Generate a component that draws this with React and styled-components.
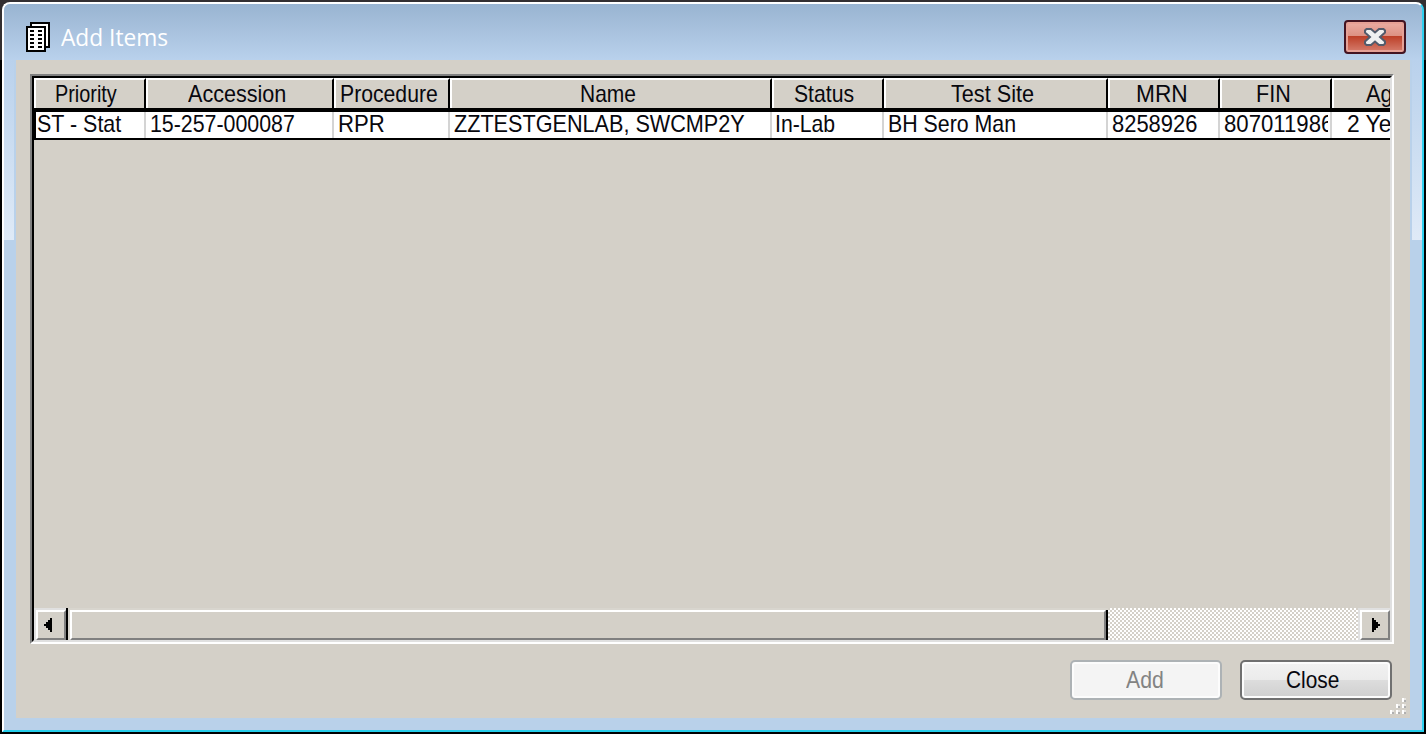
import React, { useLayoutEffect, useRef, useState } from 'react';
import styled, { createGlobalStyle } from 'styled-components';

const Global = createGlobalStyle`
  * { box-sizing: border-box; }
  body { margin: 0; background: #000; overflow: hidden; }
`;

const face = '#d4d0c8';

const Desktop = styled.div`
  width: 1426px;
  height: 734px;
  padding: 2px;
  background: linear-gradient(#332f31 0 60px, #000 60px);
`;

const Window = styled.div`
  width: 1422px;
  height: 730px;
  display: flex;
  flex-direction: column;
  border: 2px solid;
  border-color: #fff #2fd0f0 #25cdea #fff;
  border-radius: 8px 8px 0 0;
  overflow: hidden;
  background: #b9d1ea;
`;

const TitleBar = styled.div`
  flex: none;
  height: 56px;
  display: flex;
  align-items: flex-start;
  padding: 16px 16px 0 22px;
  background: linear-gradient(#99b4d1, #b9d1ec);
`;

const DocIcon = styled.svg`
  flex: none;
  width: 24px;
  height: 30px;
  margin-top: 2px;
`;

const Title = styled.div`
  flex: 1;
  padding-left: 11px;
  font: 24px/34px "Open Sans", "Noto Sans", sans-serif;
  color: #fff;
`;

const CloseBox = styled.button`
  flex: none;
  width: 62px;
  height: 34px;
  padding: 0;
  border: 2px solid #431422;
  border-radius: 4px;
  box-shadow: inset 0 0 0 2px #e6a196;
  background: linear-gradient(#ebaea4 0, #dc9082 14px, #bc3e26 14px, #d67e6e 30px);
  display: flex;
  align-items: center;
  justify-content: center;
`;

const Frame = styled.div`
  flex: 1;
  display: flex;
  min-height: 0;
  padding: 0 12px 12px;
  background:
    linear-gradient(#b9d1ec, #dfeaf7) 0 0 / 10px 180px no-repeat,
    linear-gradient(#b9d1ec, #dfeaf7) 100% 0 / 10px 180px no-repeat,
    #b9d1ea;
`;

const Client = styled.div`
  position: relative;
  flex: 1;
  display: flex;
  flex-direction: column;
  padding: 14px 16px 0 14px;
  background: ${face};
`;

const Grid = styled.div`
  flex: none;
  width: 1364px;
  height: 570px;
  border: 2px solid;
  border-color: #808080 #fff #fff #808080;
`;

const GridInner = styled.div`
  width: 1360px;
  height: 566px;
  display: flex;
  flex-direction: column;
  border: 2px solid;
  border-color: #000 #e0e0e0 #e0e0e0 #000;
  overflow: hidden;
`;

const HeaderRow = styled.div`
  flex: none;
  display: flex;
  height: 34px;
  border-bottom: 4px solid #000;
`;

const HeaderCell = styled.div`
  flex: none;
  width: ${p => p.$w}px;
  height: 30px;
  padding-left: ${p => p.$pad}px;
  border-top: 2px solid #fff;
  border-left: 2px solid #fff;
  border-right: 2px solid #000;
  line-height: 28px;
`;

const DataRow = styled.div`
  flex: none;
  display: flex;
  height: 28px;
  border-bottom: 2px solid #000;
  border-left: 2px solid #000;
  background: #fff;
`;

const DataCell = styled.div`
  flex: none;
  width: ${p => p.$w}px;
  height: 26px;
  padding-left: ${p => p.$pad}px;
  border-right: 2px solid #d4d4d4;
  line-height: 24px;
`;

const CellClip = styled.div`
  width: ${p => (p.$clip ? `${p.$clip}px` : 'auto')};
  overflow: ${p => (p.$clip ? 'hidden' : 'visible')};
`;

const FitBox = styled.span`
  display: inline-block;
  vertical-align: top;
  width: ${p => p.$w}px;
  white-space: pre;
  font-family: ${p => (p.$title ? '"Open Sans", "Noto Sans", sans-serif' : '"Liberation Sans", Arial, sans-serif')};
  font-size: 24px;
  color: ${p => p.$color || '#08080e'};
`;

const FitInner = styled.span`
  display: inline-block;
  transform-origin: 0 50%;
`;

const Spacer = styled.div`
  flex: 1;
`;

const ScrollBar = styled.div`
  flex: none;
  height: 32px;
  display: flex;
`;

const ScrollButton = styled.div`
  flex: none;
  width: ${p => (p.$first ? 34 : 32)}px;
  padding: 2px 0 0 2px;
  background: #e0e0e0;
  border-right: ${p => (p.$first ? '2px solid #000' : 'none')};
`;

const Raised = styled.div`
  width: 30px;
  height: 30px;
  border: 2px solid;
  border-color: #fff #808080 #808080 #fff;
  background: ${face};
`;

const Thumb = styled.div`
  flex: none;
  width: 1040px;
  padding: 2px 0 0 2px;
  background: linear-gradient(90deg, transparent 1038px, #000 1038px) 0 2px no-repeat, #d8d5ce;
`;

const ThumbFace = styled.div`
  width: 1036px;
  height: 30px;
  border: 2px solid;
  border-color: #fff #808080 #808080 #fff;
  background: ${face};
`;

const Track = styled.div`
  flex: 1;
  background: repeating-conic-gradient(#fff 0 25%, ${face} 0 50%) 0 0 / 4px 4px;
`;

const Actions = styled.div`
  display: flex;
  justify-content: flex-end;
  gap: 18px;
  padding: 16px 2px 0 0;
`;

const PushButton = styled.button`
  width: 152px;
  height: 40px;
  padding: 0 0 0 ${p => p.$pad}px;
  text-align: left;
  line-height: 36px;
  border: 2px solid ${p => (p.disabled ? '#adb2b5' : '#707070')};
  border-radius: 5px;
  box-shadow: inset 0 0 0 2px #fcfcfc;
  background: ${p =>
    p.disabled ? '#f4f4f4' : 'linear-gradient(#f2f2f2 0, #ebebeb 18px, #dddddd 18px, #cfcfcf 36px)'};
`;

const Grip = styled.svg`
  position: absolute;
  right: 4px;
  bottom: 4px;
  width: 16px;
  height: 16px;
`;

function Fit({ w, color, title, children }) {
  const ref = useRef(null);
  const [scale, setScale] = useState(1);
  useLayoutEffect(() => {
    setScale(w / ref.current.offsetWidth);
  }, [w, children]);
  return (
    <FitBox $w={w} $color={color} $title={title}>
      <FitInner ref={ref} style={{ transform: `scaleX(${scale})` }}>{children}</FitInner>
    </FitBox>
  );
}

const columns = [
  { label: 'Priority', w: 112, pad: 19, tw: 62, value: 'ST - Stat', vpad: 1, vw: 84 },
  { label: 'Accession', w: 188, pad: 40, tw: 98, value: '15-257-000087', vpad: 4, vw: 145 },
  { label: 'Procedure', w: 116, pad: 4, tw: 98, value: 'RPR', vpad: 4, vw: 47 },
  { label: 'Name', w: 322, pad: 128, tw: 56, value: 'ZZTESTGENLAB, SWCMP2Y', vpad: 4, vw: 291 },
  { label: 'Status', w: 112, pad: 20, tw: 60, value: 'In-Lab', vpad: 3, vw: 60 },
  { label: 'Test Site', w: 224, pad: 65, tw: 83, value: 'BH Sero Man', vpad: 4, vw: 128 },
  { label: 'MRN', w: 112, pad: 26, tw: 52, value: '8258926', vpad: 4, vw: 85 },
  { label: 'FIN', w: 112, pad: 34, tw: 35, value: '807011986', vpad: 4, vw: 109, clip: 104 },
  { label: 'Age', w: 112, pad: 32, tw: 39, value: '2 Years', vpad: 15, vw: 76 },
];

const gripDots = [0, 1, 2].flatMap(r => Array.from({ length: r + 1 }, (_, i) => [12 - i * 6, r * 6]));

export default function App() {
  return (
    <>
      <Global />
      <Desktop>
        <Window>
          <TitleBar>
            <DocIcon viewBox="0 0 12 15" shapeRendering="crispEdges">
              <path d="M2 0H12V13H2Z" fill="#000" />
              <path d="M3 1H11V12H3Z" fill="#fff" />
              <path d="M0 2H10V15H0Z" fill="#000" />
              <path d="M1 3H9V14H1Z" fill="#fff" />
              <path d="M2 4.5h2m2 0h2M2 6.5h2m2 0h2M2 8.5h2m2 0h2M2 10.5h2m2 0h2M2 12.5h2m2 0h2" stroke="#000" />
            </DocIcon>
            <Title><Fit w={107} color="#fff" title>Add Items</Fit></Title>
            <CloseBox aria-label="Close window">
              <svg width="24" height="20" viewBox="0 0 24 20">
                <path
                  d="M3.5 2H8l4 3.5L16 2h4.500l1.500 1.500v2L17 10l5 4.500v2L20.500 18H16l-4-3.500L8 18H3.500L2 16.500v-2L7 10 2 5.500v-2z"
                  fill="#f0f0f0"
                  stroke="#535b6b"
                  strokeWidth="2"
                />
              </svg>
            </CloseBox>
          </TitleBar>
          <Frame>
            <Client>
              <Grid>
                <GridInner>
                  <HeaderRow>
                    {columns.map(c => (
                      <HeaderCell key={c.label} $w={c.w} $pad={c.pad}>
                        <Fit w={c.tw}>{c.label}</Fit>
                      </HeaderCell>
                    ))}
                  </HeaderRow>
                  <DataRow>
                    {columns.map((c, i) => (
                      <DataCell key={c.label} $w={i === 0 ? c.w - 2 : c.w} $pad={c.vpad}>
                        <CellClip $clip={c.clip}><Fit w={c.vw}>{c.value}</Fit></CellClip>
                      </DataCell>
                    ))}
                  </DataRow>
                  <Spacer />
                  <ScrollBar>
                    <ScrollButton $first>
                      <Raised>
                        <svg width="26" height="26" viewBox="0 0 13 13" shapeRendering="crispEdges">
                          <path d="M6 3h1v7H6V9H5V8H4V7H3V6h1V5h1V4h1z" />
                        </svg>
                      </Raised>
                    </ScrollButton>
                    <Thumb><ThumbFace /></Thumb>
                    <Track />
                    <ScrollButton>
                      <Raised>
                        <svg width="26" height="26" viewBox="0 0 13 13" shapeRendering="crispEdges">
                          <path d="M5 3h1v1h1v1h1v1h1v1H8v1H7v1H6v1H5z" />
                        </svg>
                      </Raised>
                    </ScrollButton>
                  </ScrollBar>
                </GridInner>
              </Grid>
              <Actions>
                <PushButton disabled $pad={54}><Fit w={38} color="#838383">Add</Fit></PushButton>
                <PushButton $pad={44}><Fit w={53}>Close</Fit></PushButton>
              </Actions>
              <Grip viewBox="0 0 16 16" shapeRendering="crispEdges">
                {gripDots.map(([x, y]) => (
                  <g key={`${x}-${y}`}>
                    <rect x={x} y={y} width="2" height="4" fill="#fff" />
                    <rect x={x + 2} y={y} width="2" height="2" fill="#e8e6e2" />
                    <rect x={x + 2} y={y + 2} width="2" height="2" fill="#b0b0b0" />
                  </g>
                ))}
              </Grip>
            </Client>
          </Frame>
        </Window>
      </Desktop>
    </>
  );
}
